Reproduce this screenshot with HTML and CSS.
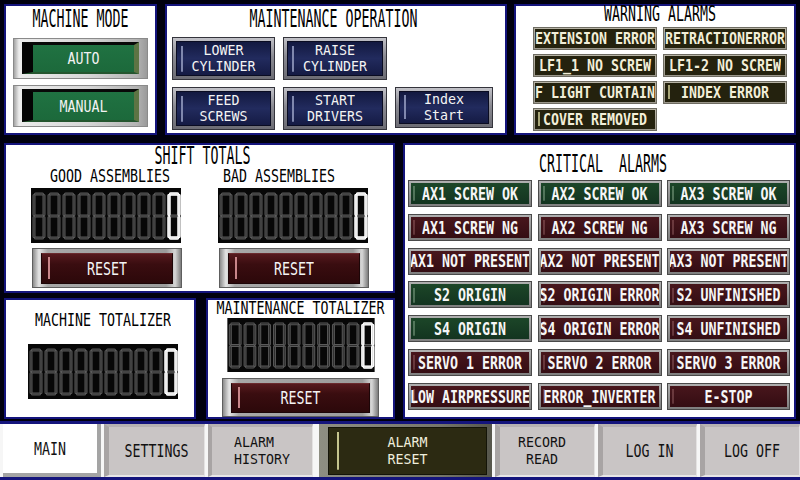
FILE: index.html
```html
<!DOCTYPE html>
<html lang="en">
<head>
<meta charset="utf-8">
<title>HMI Main</title>
<link rel="stylesheet" href="styles.css">
</head>
<body>
<div class="work">
  <div class="row-top">
    <section class="panel p-mode">
      <div class="ttl ttl-mode"><span class="tx tx-big">MACHINE MODE</span></div>
      <div class="modebtn"><div class="modeface"><span class="tx tx-btn">AUTO</span></div></div>
      <div class="modebtn"><div class="modeface"><span class="tx tx-btn">MANUAL</span></div></div>
    </section>
    <section class="panel p-maint">
      <div class="ttl ttl-maint"><span class="tx tx-big">MAINTENANCE OPERATION</span></div>
      <div class="mrow">
        <div class="mbtn"><div class="mface"><div class="stack"><span class="tx tx-btn2">LOWER</span><span class="tx tx-btn2">CYLINDER</span></div></div></div>
        <div class="mbtn mbtn-b"><div class="mface"><div class="stack"><span class="tx tx-btn2">RAISE</span><span class="tx tx-btn2">CYLINDER</span></div></div></div>
      </div>
      <div class="mrow mrow-2">
        <div class="mbtn"><div class="mface"><div class="stack"><span class="tx tx-btn2">FEED</span><span class="tx tx-btn2">SCREWS</span></div></div></div>
        <div class="mbtn mbtn-b"><div class="mface"><div class="stack"><span class="tx tx-btn2">START</span><span class="tx tx-btn2">DRIVERS</span></div></div></div>
        <div class="mbtn mbtn-c"><div class="mface"><div class="stack"><span class="tx tx-btn2">Index</span><span class="tx tx-btn2">Start</span></div></div></div>
      </div>
    </section>
    <section class="panel p-warn">
      <div class="ttl ttl-warn"><span class="tx tx-mid">WARNING ALARMS</span></div>
      <div class="wgrid">
        <div class="wbtn"><div class="wface"><span class="tx tx-warn">EXTENSION ERROR</span></div></div>
        <div class="wbtn"><div class="wface"><span class="tx tx-warn">RETRACTIONERROR</span></div></div>
        <div class="wbtn"><div class="wface"><span class="tx tx-warn">LF1_1 NO SCREW</span></div></div>
        <div class="wbtn"><div class="wface"><span class="tx tx-warn">LF1-2 NO SCREW</span></div></div>
        <div class="wbtn"><div class="wface"><span class="tx tx-warn">F LIGHT CURTAIN</span></div></div>
        <div class="wbtn"><div class="wface hl"><span class="tx tx-warn">INDEX ERROR</span></div></div>
        <div class="wbtn"><div class="wface hl"><span class="tx tx-warn">COVER REMOVED</span></div></div>
      </div>
    </section>
  </div>

  <div class="row-mid">
    <div class="col-left">
      <section class="panel p-shift">
        <div class="ttl ttl-shift"><span class="tx tx-big">SHIFT TOTALS</span></div>
        <div class="shift-cols">
          <div class="cnt-col">
            <div class="sub sub-good"><span class="tx tx-sub">GOOD ASSEMBLIES</span></div>
            <svg class="lcd" width="150" height="55" viewBox="0 0 150 55">
              <defs>
                <g id="d8" fill="none" stroke-linecap="round">
                  <path stroke="#5a5a5a" stroke-width="3" d="M2.5 1.5H9.5M1 3V22M11 3V22M2.5 23.5H9.5M1 25V44M11 25V44M2.5 45.5H9.5"/>
                  <path stroke="#2e2e2e" stroke-width="1.1" d="M2.5 1.5H9.5M1 3V22M11 3V22M2.5 23.5H9.5M1 25V44M11 25V44M2.5 45.5H9.5"/>
                </g>
                <g id="d0" fill="none" stroke-linecap="round">
                  <path stroke="#ffffff" stroke-width="3.4" d="M2.5 1.5H9.5M1 3V22M11 3V22M1 25V44M11 25V44M2.5 45.5H9.5"/>
                  <path stroke="#d4d4d4" stroke-width="0.8" d="M2.5 1.5H9.5M1 3V22M11 3V22M1 25V44M11 25V44M2.5 45.5H9.5"/>
                </g>
                <g id="r9">
                  <use href="#d8" x="2"/><use href="#d8" x="17"/><use href="#d8" x="32"/>
                  <use href="#d8" x="47"/><use href="#d8" x="62"/><use href="#d8" x="77"/>
                  <use href="#d8" x="92"/><use href="#d8" x="107"/><use href="#d8" x="122"/>
                </g>
                <g id="lcd10">
                  <rect width="150" height="55" fill="#070707"/>
                  <use href="#r9" y="4.5"/>
                  <use href="#d8" x="137" y="4.5"/>
                  <use href="#d0" x="137" y="4.5"/>
                </g>
              </defs>
              <use href="#lcd10"/>
            </svg>
            <div class="rbtn"><div class="rface"><span class="tx tx-reset">RESET</span></div></div>
          </div>
          <div class="cnt-col">
            <div class="sub sub-bad"><span class="tx tx-sub">BAD ASSEMBLIES</span></div>
            <svg class="lcd" width="150" height="55" viewBox="0 0 150 55"><use href="#lcd10"/></svg>
            <div class="rbtn"><div class="rface"><span class="tx tx-reset">RESET</span></div></div>
          </div>
        </div>
      </section>
      <div class="row-tot">
        <section class="panel p-mtot">
          <div class="tot-inner">
            <div class="sub sub-mtot"><span class="tx tx-sub">MACHINE TOTALIZER</span></div>
            <svg class="lcd lcd-m" width="150" height="55" viewBox="0 0 150 55"><use href="#lcd10"/></svg>
          </div>
        </section>
        <section class="panel p-ntot">
          <div class="sub sub-ntot"><span class="tx tx-sub">MAINTENANCE TOTALIZER</span></div>
          <svg class="lcd lcd-n" width="150" height="54" viewBox="0 0 150 55"><use href="#lcd10"/></svg>
          <div class="rbtn rbtn-n"><div class="rface"><span class="tx tx-reset">RESET</span></div></div>
        </section>
      </div>
    </div>

    <section class="panel p-crit">
      <div class="ttl ttl-crit"><span class="tx tx-big">CRITICAL  ALARMS</span></div>
      <div class="cgrid">
        <div class="cbtn"><div class="cface ok"><span class="tx tx-crit">AX1 SCREW OK</span></div></div>
        <div class="cbtn"><div class="cface ok"><span class="tx tx-crit">AX2 SCREW OK</span></div></div>
        <div class="cbtn"><div class="cface ok"><span class="tx tx-crit">AX3 SCREW OK</span></div></div>
        <div class="cbtn"><div class="cface ng"><span class="tx tx-crit">AX1 SCREW NG</span></div></div>
        <div class="cbtn"><div class="cface ng"><span class="tx tx-crit">AX2 SCREW NG</span></div></div>
        <div class="cbtn"><div class="cface ng"><span class="tx tx-crit">AX3 SCREW NG</span></div></div>
        <div class="cbtn"><div class="cface ng"><span class="tx tx-crit">AX1 NOT PRESENT</span></div></div>
        <div class="cbtn"><div class="cface ng"><span class="tx tx-crit">AX2 NOT PRESENT</span></div></div>
        <div class="cbtn"><div class="cface ng"><span class="tx tx-crit">AX3 NOT PRESENT</span></div></div>
        <div class="cbtn"><div class="cface ok"><span class="tx tx-crit">S2 ORIGIN</span></div></div>
        <div class="cbtn"><div class="cface ng"><span class="tx tx-crit">S2 ORIGIN ERROR</span></div></div>
        <div class="cbtn"><div class="cface ng"><span class="tx tx-crit">S2 UNFINISHED</span></div></div>
        <div class="cbtn"><div class="cface ok"><span class="tx tx-crit">S4 ORIGIN</span></div></div>
        <div class="cbtn"><div class="cface ng"><span class="tx tx-crit">S4 ORIGIN ERROR</span></div></div>
        <div class="cbtn"><div class="cface ng"><span class="tx tx-crit">S4 UNFINISHED</span></div></div>
        <div class="cbtn"><div class="cface ng"><span class="tx tx-crit">SERVO 1 ERROR</span></div></div>
        <div class="cbtn"><div class="cface ng"><span class="tx tx-crit">SERVO 2 ERROR</span></div></div>
        <div class="cbtn"><div class="cface ng"><span class="tx tx-crit">SERVO 3 ERROR</span></div></div>
        <div class="cbtn"><div class="cface ng"><span class="tx tx-crit">LOW AIRPRESSURE</span></div></div>
        <div class="cbtn"><div class="cface ng"><span class="tx tx-crit">ERROR_INVERTER</span></div></div>
        <div class="cbtn"><div class="cface ng"><span class="tx tx-crit">E-STOP</span></div></div>
      </div>
    </section>
  </div>
</div>

<nav class="tabs">
  <div class="tab tab-on"><span class="tx tx-tab">MAIN</span></div>
  <div class="tab tab-set"><span class="tx tx-tab">SETTINGS</span></div>
  <div class="tab tab-hist"><div class="stack stack-tab stack-left"><span class="tx tx-tab2">ALARM</span><span class="tx tx-tab2">HISTORY</span></div></div>
  <div class="arbtn"><div class="arface"><div class="stack stack-tab"><span class="tx tx-tab2">ALARM</span><span class="tx tx-tab2">RESET</span></div></div></div>
  <div class="tab tab-rec"><div class="stack stack-tab stack-rec"><span class="tx tx-tab2">RECORD</span><span class="tx tx-tab2">READ</span></div></div>
  <div class="tab tab-in"><span class="tx tx-tab">LOG IN</span></div>
  <div class="tab tab-off"><span class="tx tx-tab">LOG OFF</span></div>
</nav>
</body>
</html>
```

FILE: styles.css
```css
* { box-sizing: border-box; }
html, body { margin: 0; padding: 0; }
body {
  width: 800px;
  height: 480px;
  overflow: hidden;
  background: #00000e;
  font-family: "DejaVu Sans Mono", "Liberation Mono", monospace;
  font-size: 13.29px;
  color: #000;
}

/* text: 8px-per-char mono, stretched vertically like the HMI font */
.tx { display: inline-block; white-space: pre; line-height: 1; text-align: center; }
.tx-big { transform: scaleY(1.9); }
.tx-mid { transform: scaleY(1.55); }
.tx-sub { transform: scaleY(1.3); }
.tx-btn { transform: scaleY(1.25); }
.tx-btn2 { transform: scaleY(1.03); }
.tx-reset { transform: scaleY(1.35); }
.tx-warn { transform: scaleY(1.22); font-weight: bold; }
.tx-crit { transform: scaleY(1.38); font-weight: bold; }
.tx-tab { transform: scaleY(1.35); }
.tx-tab2 { transform: scaleY(1.09); }

/* two-line labels: one box per line */
.stack { display: flex; flex-direction: column; align-items: center; gap: 4.7px; }
.stack .tx { line-height: 11.3px; }
.stack-tab { gap: 5.7px; }
.stack-left { align-items: flex-start; }
.stack-rec { margin-right: 10px; }

.work { padding: 4px 4px 0 4px; }
.panel { background: #fff; border: 2px solid #14147c; }
.ttl { display: flex; align-items: center; justify-content: center; }

/* top row */
.row-top { display: flex; height: 131px; }
.p-mode { width: 153px; display: flex; flex-direction: column; align-items: center; }
.ttl-mode { height: 26px; align-self: stretch; }
.modebtn {
  width: 135px; height: 42px; margin-bottom: 6px;
  padding: 3px 8px 4px 8px;
  border: 1px solid #8a8a8a;
  background: linear-gradient(to right, #a4a4a4 0, #ececec 5px, #d6d6d6 55%, #b4b4b4 92%, #9a9a9a 100%);
}
.ttl-mode + .modebtn { margin-top: 6px; }
.modeface {
  height: 100%;
  display: flex; align-items: center; justify-content: center;
  color: #f2f2f2;
  border-style: solid;
  border-width: 3px 5px 2px 11px;
  border-color: #080808 #5d7444 #24562f #030303;
  background: linear-gradient(#207242, #1c693b);
}

.p-maint { width: 342px; margin-left: 8px; padding-left: 5px; display: flex; flex-direction: column; }
.ttl-maint { height: 26px; margin-right: 10px; }
.mrow { display: flex; gap: 8px; margin-top: 5px; }
.mrow-2 { margin-top: 7px; }
.mbtn {
  width: 103px; height: 43px; padding: 3px;
  border: 1px solid #34343c;
  background: linear-gradient(#c2c2c8, #8a8a92 45%, #6c6c74);
}
.mbtn-b { width: 104px; }
.mbtn-c { width: 98px; height: 41px; }
.mface {
  height: 100%;
  display: flex; align-items: center; justify-content: center;
  color: #f4f4f4;
  border: 1px solid #0a0c22;
  background:
    linear-gradient(to right, transparent 4px, #8088ae 4px, #8088ae 6px, transparent 6px) center / 100% 78% no-repeat,
    linear-gradient(#131940, #222b5e 50%, #151b44);
}

.p-warn { width: 282px; margin-left: 7px; padding-left: 17px; }
.ttl-warn { width: 254px; height: 18px; }
.wgrid {
  display: grid;
  grid-template-columns: 124px 124px;
  grid-auto-rows: 23px;
  column-gap: 6px; row-gap: 4px;
  margin-top: 3px;
}
.wbtn { border: 1px solid #6e6c62; padding: 1px; background: linear-gradient(#b8b4a6, #9a968a); }
.wface {
  height: 100%; overflow: hidden;
  display: flex; align-items: center; justify-content: center;
  color: #f2eed8;
  background: #24220e;
}
.wface.hl {
  background:
    linear-gradient(to right, transparent 3px, #a8a678 3px, #a8a678 5px, transparent 5px) center / 100% 75% no-repeat,
    #24220e;
}

/* middle */
.row-mid { display: flex; height: 276px; margin-top: 8px; }
.col-left { width: 391px; display: flex; flex-direction: column; }
.p-shift { height: 150px; }
.ttl-shift { height: 22px; padding-left: 6px; }
.shift-cols { display: flex; gap: 36px; padding-left: 25px; }
.cnt-col { width: 151px; display: flex; flex-direction: column; }
.sub { display: flex; align-items: center; }
.sub-good { height: 20px; padding-left: 19px; }
.sub-bad { height: 20px; padding-left: 5px; }
.lcd { display: block; margin-top: 1px; }
.rbtn {
  width: 150px; height: 40px; margin-top: 5px; margin-left: 1px;
  padding: 4px 8px 3px 8px;
  border: 1px solid #5e5e5e;
  background: linear-gradient(to right, #8c8c8c, #e4e4e4 4%, #a8a8a8 10%, #9c9c9c 90%, #d6d6d6 96%, #7c7c7c);
}
.rface {
  height: 100%;
  display: flex; align-items: center; justify-content: center;
  color: #f4f4f4;
  border: 1px solid #1c0507;
  border-top-color: #6a2a2e;
  background:
    linear-gradient(to right, transparent 6px, #c8868a 6px, #c8868a 8px, transparent 8px) center / 100% 76% no-repeat,
    linear-gradient(#561a1e, #3a0d10 35%, #2c080a);
}

.row-tot { display: flex; height: 121px; margin-top: 5px; }
.p-mtot { width: 192px; padding-left: 22px; }
.tot-inner { width: 150px; display: flex; flex-direction: column; }
.sub-mtot { height: 42px; justify-content: center; }
.lcd-m { margin-top: 2px; }
.p-ntot { width: 189px; margin-left: 10px; display: flex; flex-direction: column; align-items: center; }
.sub-ntot { height: 15px; margin-top: 1px; justify-content: center; }
.lcd-n { margin-top: 2px; }
.rbtn-n { width: 157px; height: 39px; margin-top: 6px; margin-left: 0; }

.p-crit { width: 393px; margin-left: 8px; padding: 8px 0 0 3px; }
.ttl-crit { height: 22px; width: 382px; padding-left: 8px; }
.cgrid {
  display: grid;
  grid-template-columns: 124px 124px 123px;
  grid-auto-rows: 27px;
  column-gap: 5.5px; row-gap: 6.8px;
  margin-top: 5px;
}
.cbtn { border: 1px solid #4a4a4a; padding: 2px; background: linear-gradient(#b0b0b0, #7e7e7e); }
.cface {
  height: 100%; overflow: hidden;
  display: flex; align-items: center; justify-content: center;
  color: #f6f6f6;
}
.ok {
  background:
    linear-gradient(to right, transparent 2px, rgba(190,220,190,0.35) 2px, rgba(190,220,190,0.35) 4px, transparent 4px) center / 100% 70% no-repeat,
    linear-gradient(#1c4628, #133420);
}
.ng {
  background:
    linear-gradient(to right, transparent 2px, rgba(230,170,170,0.25) 2px, rgba(230,170,170,0.25) 4px, transparent 4px) center / 100% 70% no-repeat,
    linear-gradient(#48161c, #340d13);
}

/* bottom tab bar */
.tabs {
  display: flex; gap: 3px;
  margin-top: 2px;
  height: 59px;
  padding-left: 3px;
  border-top: 3px solid #14147c;
  border-bottom: 3px solid #14147c;
  background: #f6f6f6;
}
.tab {
  height: 53px;
  display: flex; align-items: center; justify-content: center;
  color: #111;
  background: #c9c5c5;
  border-left: 5px solid #a8a4a4;
  border-top: 3px solid #b6b2b2;
  border-right: 1px solid #e4e2e2;
  border-bottom: 2px solid #e8e6e6;
}
.tab-on {
  width: 98px;
  background: #fff;
  border: 0;
  border-right: 4px solid #a4a4a4;
  border-bottom: 4px solid #a4a4a4;
}
.tab-set { width: 101px; }
.tab-hist { width: 105px; border-left-width: 4px; }
.tab-rec { width: 100px; }
.tab-in { width: 99px; }
.tab-off { width: 100px; }
.arbtn {
  width: 173px; height: 53px; margin-left: 3px;
  padding: 3px 5px 2px 9px;
  background: linear-gradient(to right, #8e8e82, #76766a 70%, #56564c);
}
.arface {
  height: 100%;
  display: flex; align-items: center; justify-content: center;
  color: #efeedc;
  border: 1px solid #141408;
  background:
    linear-gradient(to right, transparent 8px, #c6c68e 8px, #c6c68e 10px, transparent 10px) center / 100% 82% no-repeat,
    #2c2a12;
}
```
